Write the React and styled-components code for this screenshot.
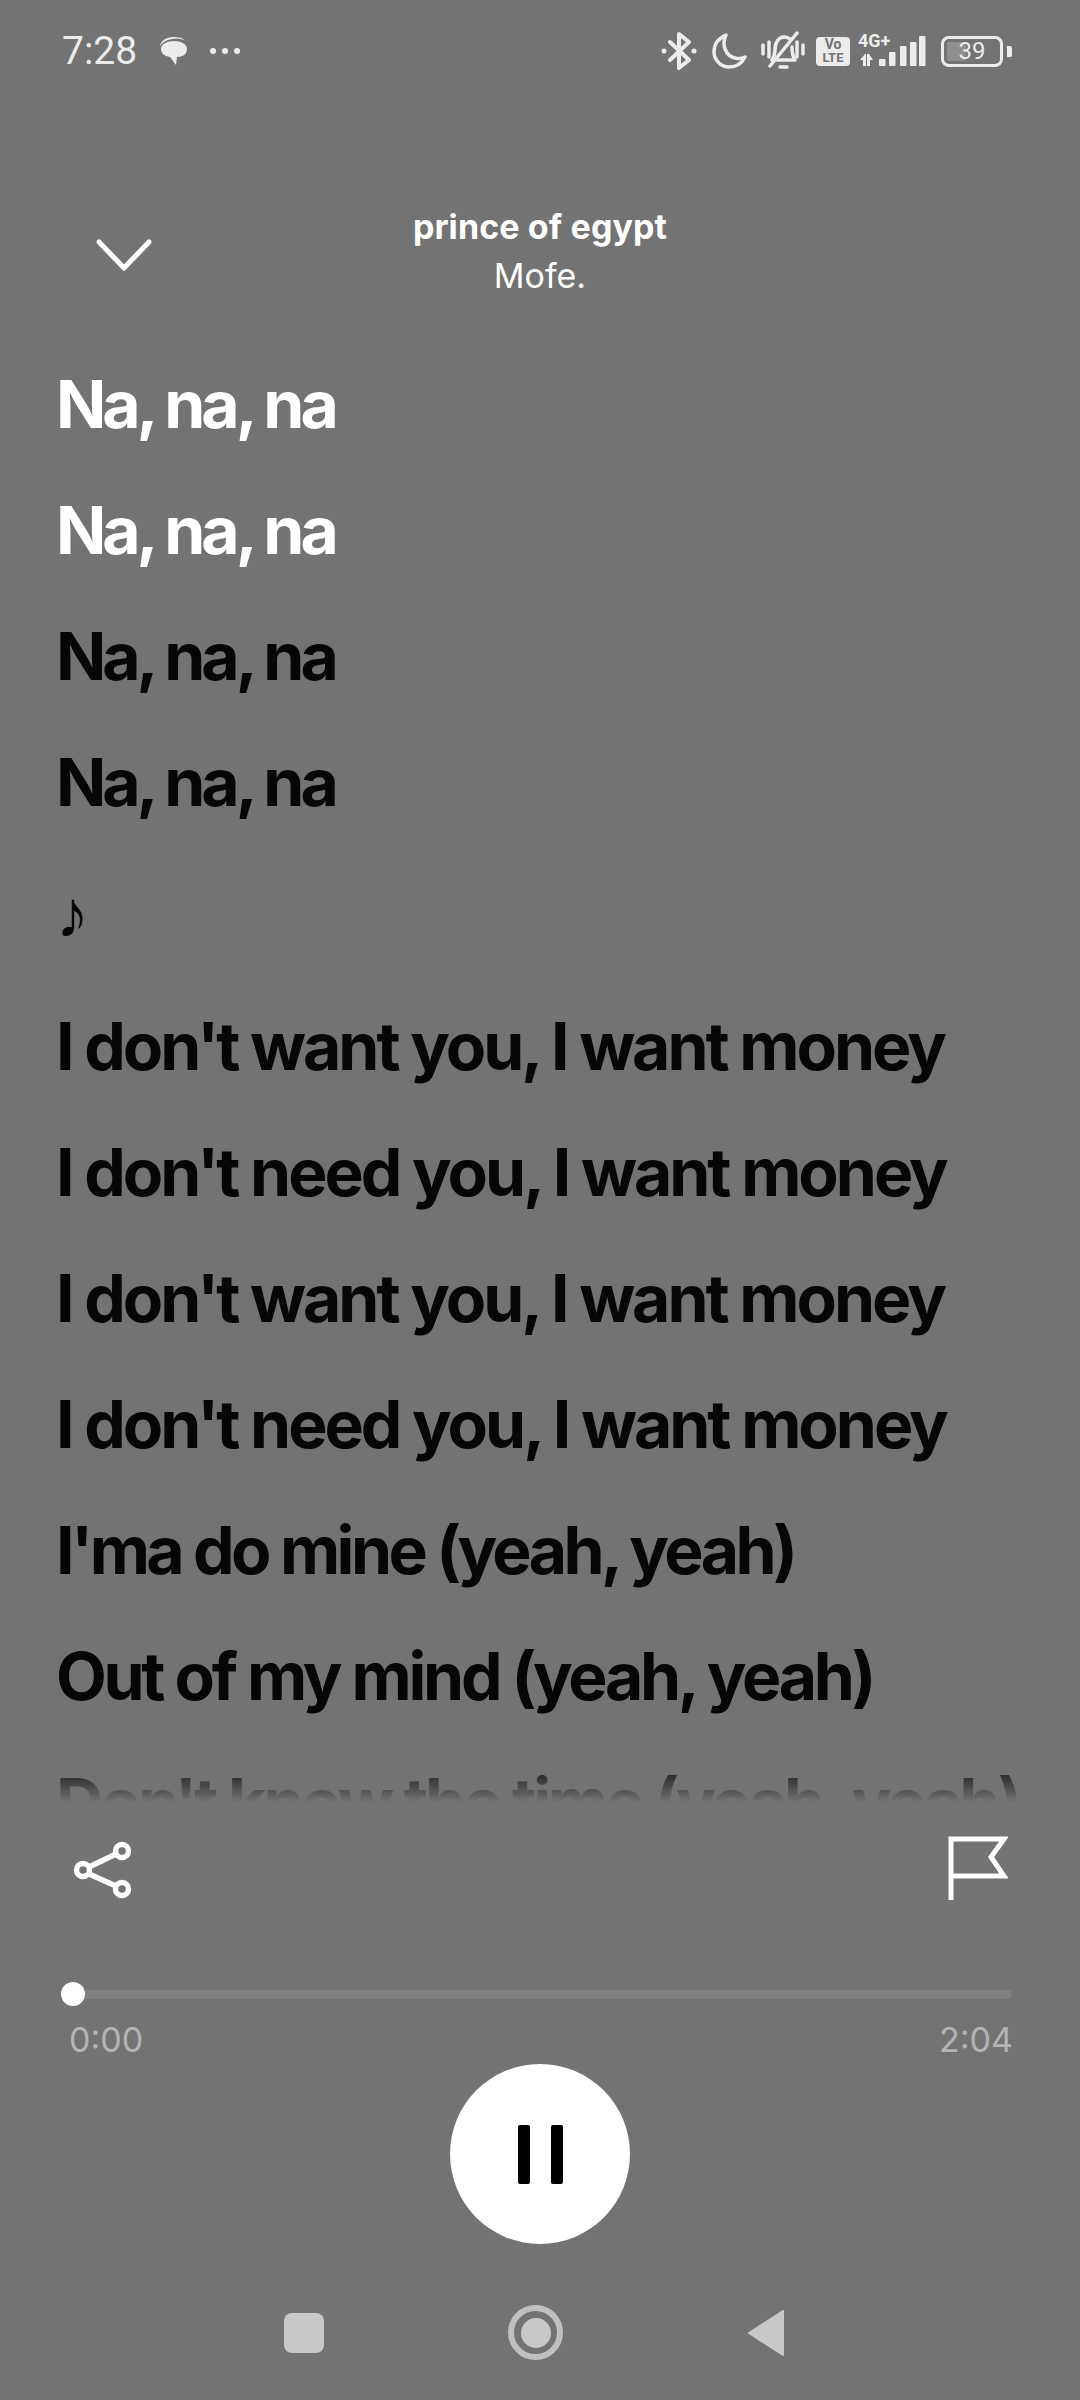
import React from 'react';
import styled, { createGlobalStyle } from 'styled-components';

const lyrics = [
  { text: 'Na, na, na', sung: true, tracking: -4 },
  { text: 'Na, na, na', sung: true, tracking: -4 },
  { text: 'Na, na, na', tracking: -4 },
  { text: 'Na, na, na', tracking: -4 },
  { text: '♪', note: true },
  { text: "I don't want you, I want money" },
  { text: "I don't need you, I want money" },
  { text: "I don't want you, I want money" },
  { text: "I don't need you, I want money" },
  { text: "I'ma do mine (yeah, yeah)", tracking: -3.6 },
  { text: 'Out of my mind (yeah, yeah)', tracking: -3.3 },
  { text: "Don't know the time (yeah, yeah)" },
];

const App = () => (
  <Page>
    <GlobalStyle />
    <StatusBar>
      <StatusLeft>
        <Clock>7:28</Clock>
        <svg width="30" height="30" viewBox="0 0 30 30" fill="#ececec">
          <path d="M2 11C2 5 8 1 16 1c5 0 9 1 10 3-3-1.500-8-2-12-1C8 4 3 7 2 11z" />
          <path d="M16 5c7 0 13 3 13 8s-4 8-10 8l-1 8-6-8C6 20 3 17 3 13c0-5 6-8 13-8z" />
        </svg>
        <Dots>
          <i /><i /><i />
        </Dots>
      </StatusLeft>
      <StatusRight>
        <svg width="36" height="38" viewBox="0 0 36 38" fill="none" stroke="#ececec" strokeWidth="4" strokeLinejoin="round" strokeLinecap="round">
          <path d="M9 10l19 18-10 8V2l10 8L9 28" />
          <circle cx="3" cy="19" r="2.500" fill="#ececec" stroke="none" />
          <circle cx="33" cy="19" r="2.500" fill="#ececec" stroke="none" />
        </svg>
        <svg width="36" height="36" viewBox="0 0 36 36" fill="none" stroke="#ececec" strokeWidth="3.500" strokeLinejoin="round">
          <path d="M15 2C8 5 3 11 3 19c0 8 7 15 15 15 7 0 13-4 16-10-3 1.500-7 2-10 1C15 23 10 12 15 2z" />
        </svg>
        <svg width="44" height="40" viewBox="0 0 44 40" fill="none" stroke="#ececec" strokeWidth="3.500" strokeLinecap="round" strokeLinejoin="round">
          <path d="M2 14v9M8 11v15M36 11v15M42 14v9" />
          <path d="M11 29c2-3 3-5 3-10 0-8 4-13 9-13 3 0 5 1 7 3M31 16c0 6 1 10 3 13H16" />
          <path d="M9 35L36 2" />
          <path d="M19 36h7" />
        </svg>
        <VoLte>
          <span>Vo</span>
          <span>LTE</span>
        </VoLte>
        <Network>
          <NetworkLabel>4G+</NetworkLabel>
          <svg width="68" height="34" viewBox="0 0 68 34" fill="#ececec">
            <path d="M2 26l5-6h1v12H5v-6zM9 20h2l4 6h-3v6H9z" />
            <rect x="21" y="25" width="6.500" height="7" rx="1" />
            <rect x="31" y="18" width="6.500" height="14" rx="1" />
            <rect x="42" y="12" width="6.500" height="20" rx="1" />
            <rect x="52" y="8" width="6.500" height="24" rx="1" />
            <rect x="61" y="2" width="6.500" height="30" rx="1" />
          </svg>
        </Network>
        <Battery>
          <BatteryBody>
            <BatteryFill />
            <BatteryLevel>39</BatteryLevel>
          </BatteryBody>
          <BatteryTip />
        </Battery>
      </StatusRight>
    </StatusBar>

    <Header>
      <svg width="56" height="32" viewBox="0 0 56 32" fill="none" stroke="#fff" strokeWidth="5" strokeLinecap="round" strokeLinejoin="round">
        <path d="M3 3l25 26L53 3" />
      </svg>
      <TrackInfo>
        <TrackTitle>prince of egypt</TrackTitle>
        <TrackArtist>Mofe.</TrackArtist>
      </TrackInfo>
    </Header>

    <Lyrics>
      {lyrics.map((line, i) => (
        <LyricLine key={i} $sung={line.sung} $note={line.note} $tracking={line.tracking}>
          {line.text}
        </LyricLine>
      ))}
    </Lyrics>

    <Actions>
      <svg width="60" height="64" viewBox="0 -6 60 64" fill="none" stroke="#fff" strokeWidth="5.500">
        <circle cx="10" cy="28" r="6.500" />
        <circle cx="49" cy="9" r="6.500" />
        <circle cx="49" cy="47" r="6.500" />
        <path d="M16 25l27-13M16 32l27 12" />
      </svg>
      <svg width="60" height="64" viewBox="0 0 60 64" fill="none" stroke="#fff" strokeWidth="5">
        <path d="M3 64V3h53l-13 18 13 19H3" />
      </svg>
    </Actions>

    <Progress>
      <Thumb />
      <Track />
    </Progress>

    <Times>
      <span>0:00</span>
      <span>2:04</span>
    </Times>

    <PauseRow>
      <PauseButton>
        <PauseBar />
        <PauseBar />
      </PauseButton>
    </PauseRow>

    <NavBar>
      <NavSquare />
      <NavHome>
        <NavHomeDot />
      </NavHome>
      <svg width="38" height="48" viewBox="0 0 38 48" fill="#c8c8c8" stroke="#c8c8c8" strokeWidth="2" strokeLinejoin="round">
        <path d="M36 2v44L2 24z" />
      </svg>
    </NavBar>
  </Page>
);

const GlobalStyle = createGlobalStyle`
  html, body {
    margin: 0;
    padding: 0;
    background: #737373;
  }
  * {
    box-sizing: border-box;
  }
`;

const Page = styled.div`
  width: 1080px;
  height: 2400px;
  overflow: hidden;
  background: #737373;
  display: flex;
  flex-direction: column;
  font-family: Inter, 'Liberation Sans', sans-serif;
`;

const StatusBar = styled.div`
  height: 100px;
  padding: 30px 68px 0 62px;
  display: flex;
  justify-content: space-between;
  align-items: flex-start;
`;

const StatusLeft = styled.div`
  display: flex;
  align-items: center;
  gap: 22px;
  height: 42px;
`;

const Clock = styled.span`
  font-family: Roboto, sans-serif;
  font-size: 39px;
  color: #ececec;
  width: 74px;
`;

const Dots = styled.div`
  display: flex;
  gap: 6px;
  i {
    width: 6px;
    height: 6px;
    border-radius: 50%;
    background: #ececec;
  }
`;

const StatusRight = styled.div`
  display: flex;
  align-items: center;
  gap: 14px;
  height: 42px;
`;

const VoLte = styled.div`
  width: 34px;
  height: 29px;
  margin-left: -3px;
  border-radius: 4px;
  background: #ececec;
  color: #737373;
  font-family: Roboto, sans-serif;
  font-weight: 700;
  font-size: 14px;
  line-height: 13px;
  display: flex;
  flex-direction: column;
  align-items: center;
  justify-content: center;
  span:last-child {
    font-size: 13px;
  }
`;

const Network = styled.div`
  position: relative;
  width: 68px;
  height: 34px;
  margin-left: -6px;
`;

const NetworkLabel = styled.span`
  position: absolute;
  left: 0;
  top: -2px;
  font-family: Roboto, sans-serif;
  font-weight: 700;
  font-size: 18px;
  line-height: 18px;
  color: #ececec;
`;

const Battery = styled.div`
  display: flex;
  align-items: center;
  gap: 4px;
  margin-left: 1px;
`;

const BatteryBody = styled.div`
  position: relative;
  width: 62px;
  height: 31px;
  border: 3px solid #ececec;
  border-radius: 8px;
  display: flex;
  align-items: center;
  justify-content: center;
`;

const BatteryFill = styled.div`
  position: absolute;
  left: 3px;
  top: 3px;
  bottom: 3px;
  width: 19px;
  background: #8f8f8f;
  border-radius: 2px;
`;

const BatteryLevel = styled.span`
  position: relative;
  font-family: Roboto, sans-serif;
  font-size: 24px;
  color: #ececec;
`;

const BatteryTip = styled.div`
  width: 5px;
  height: 11px;
  background: #ececec;
  border-radius: 0 2px 2px 0;
`;

const Header = styled.div`
  position: relative;
  height: 220px;
  padding: 139px 0 0 96px;
`;

const TrackInfo = styled.div`
  position: absolute;
  left: 0;
  right: 0;
  top: 104px;
  text-align: center;
  color: #fff;
`;

const TrackTitle = styled.div`
  font-size: 34px;
  font-weight: 700;
  line-height: 46px;
  letter-spacing: 0.1px;
`;

const TrackArtist = styled.div`
  margin-top: 3px;
  font-size: 34px;
  font-weight: 400;
  line-height: 46px;
`;

const Lyrics = styled.div`
  height: 1492px;
  padding: 21px 0 0 56px;
  overflow: hidden;
  -webkit-mask-image: linear-gradient(to bottom, #000 1440px, transparent 1482px);
  mask-image: linear-gradient(to bottom, #000 1440px, transparent 1482px);
`;

const LyricLine = styled.div`
  height: ${(p) => (p.$note ? 138 : 126)}px;
  line-height: ${(p) => (p.$note ? 138 : 126)}px;
  font-family: ${(p) => (p.$note ? "'Liberation Sans'," : '')} Inter, sans-serif;
  font-size: 66px;
  font-weight: 700;
  letter-spacing: ${(p) => p.$tracking ?? -3}px;
  white-space: nowrap;
  color: ${(p) => (p.$sung ? '#fff' : '#060606')};
`;

const Actions = styled.div`
  height: 170px;
  padding: 24px 72px 0 73px;
  display: flex;
  justify-content: space-between;
  align-items: flex-start;
`;

const Progress = styled.div`
  display: flex;
  align-items: center;
  height: 24px;
  padding: 0 68px 0 61px;
`;

const Thumb = styled.div`
  width: 24px;
  height: 24px;
  border-radius: 50%;
  background: #fff;
`;

const Track = styled.div`
  flex: 1;
  height: 9px;
  background: #808080;
  border-radius: 0 5px 5px 0;
`;

const Times = styled.div`
  display: flex;
  justify-content: space-between;
  padding: 15px 67px 0 69px;
  font-size: 34px;
  line-height: 38px;
  font-weight: 400;
  color: #b4b4b4;
`;

const PauseRow = styled.div`
  display: flex;
  justify-content: center;
  padding-top: 5px;
`;

const PauseButton = styled.div`
  width: 180px;
  height: 180px;
  border-radius: 50%;
  background: #fff;
  display: flex;
  align-items: center;
  justify-content: center;
  gap: 21px;
`;

const PauseBar = styled.div`
  width: 12px;
  height: 59px;
  border-radius: 2px;
  background: #000;
`;

const NavBar = styled.div`
  height: 117px;
  padding: 60px 0 0 284px;
  display: flex;
  align-items: center;
  gap: 184px;
`;

const NavSquare = styled.div`
  width: 40px;
  height: 40px;
  border-radius: 8px;
  background: #c8c8c8;
`;

const NavHome = styled.div`
  width: 55px;
  height: 55px;
  border-radius: 50%;
  border: 6px solid #c0c0c0;
  display: flex;
  align-items: center;
  justify-content: center;
`;

const NavHomeDot = styled.div`
  width: 30px;
  height: 30px;
  border-radius: 50%;
  background: #c8c8c8;
`;

export default App;
